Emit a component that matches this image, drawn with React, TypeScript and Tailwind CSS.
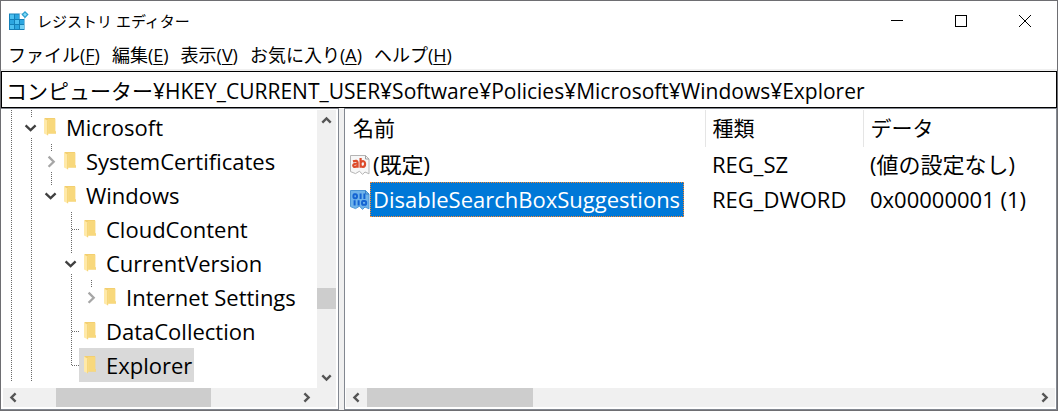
import React, { useState } from "react";

type Guide = "none" | "full" | "branch" | "last" | "open" | "openEnd" | "closed" | "closedEnd";

interface ITreeItem {
  name: string;
  guides: Guide[];
}

interface IValue {
  name: string;
  kind: "string" | "binary";
  type: string;
  data: string;
}

const menus = [
  { label: "ファイル", hotkey: "F" },
  { label: "編集", hotkey: "E" },
  { label: "表示", hotkey: "V" },
  { label: "お気に入り", hotkey: "A" },
  { label: "ヘルプ", hotkey: "H" },
];

const tree: ITreeItem[] = [
  { name: "Microsoft", guides: ["full", "open"] },
  { name: "SystemCertificates", guides: ["full", "full", "closed"] },
  { name: "Windows", guides: ["full", "full", "openEnd"] },
  { name: "CloudContent", guides: ["full", "full", "none", "branch"] },
  { name: "CurrentVersion", guides: ["full", "full", "none", "open"] },
  { name: "Internet Settings", guides: ["full", "full", "none", "full", "closedEnd"] },
  { name: "DataCollection", guides: ["full", "full", "none", "branch"] },
  { name: "Explorer", guides: ["full", "full", "none", "last"] },
];

const values: IValue[] = [
  { name: "(既定)", kind: "string", type: "REG_SZ", data: "(値の設定なし)" },
  {
    name: "DisableSearchBoxSuggestions",
    kind: "binary",
    type: "REG_DWORD",
    data: "0x00000001 (1)",
  },
];

// dotted line of each kind of cell
const guideLines: Record<Guide, string> = {
  none: "",
  full: "M10.5 0V34",
  branch: "M10.5 0V34M11 17.5H18",
  last: "M10.5 0V18M11 17.5H18",
  open: "M10.5 0V8M10.5 28V34",
  openEnd: "M10.5 0V8",
  closed: "M10.5 0V8M10.5 28V34",
  closedEnd: "M10.5 0V8",
};

const TreeGuide = ({ guide, last }: { guide: Guide; last: boolean }) => (
  <svg
    viewBox={last ? "0 0 18 34" : "0 0 20 34"}
    className={last ? "h-[34px] w-[18px] shrink-0" : "h-[34px] w-5 shrink-0"}
    fill="none"
    aria-hidden="true"
  >
    <path d={guideLines[guide]} stroke="#6b6b6b" strokeDasharray="1 1" shapeRendering="crispEdges" />
    {guide.startsWith("open") && (
      <path d="M4.6 15.4L9.6 20.2L14.6 15.4" stroke="#404040" strokeWidth="2.3" />
    )}
    {guide.startsWith("closed") && (
      <path d="M7.6 12.6L12.7 17.7L7.6 22.8" stroke="#a6a6a6" strokeWidth="2.3" />
    )}
  </svg>
);

const FolderIcon = () => (
  <svg viewBox="0 0 12 18" className="h-[18px] w-3 shrink-0" aria-hidden="true">
    <path d="M0.5 0H10.6Q11.2 0 11.2 0.6V13.5H12V15.5H4L0.5 14Z" fill="#f3cf70" />
    <path d="M4 1H11.2V13.5H12V15.5H4Z" fill="#f8d87c" />
    <path d="M0 0.6L4.2 3V17.6L0 15.4Z" fill="#ffe9a8" />
    <path d="M3.6 3V17.2" stroke="#f3cf6d" strokeWidth="0.8" />
  </svg>
);

const RegeditIcon = () => (
  <svg viewBox="0 0 20 20" className="h-5 w-5" aria-hidden="true">
    <path d="M0 2.5H15.5V19H0Z" fill="#1480b8" />
    <path d="M1 3.5H5V8H1ZM6 9H10V13H6ZM1 14H5V18H1Z" fill="#4cc0f0" />
    <path d="M6 3.5H10V8H6ZM1 9H5V13H1ZM11 9H15V13H11ZM6 14H10V18H6Z" fill="#2ba6e0" />
    <path d="M11 14H15V18H11Z" fill="#74d2f6" />
    <path d="M10.6 2.4H15.5V8H10.6Z" fill="#ffffff" />
    <path d="M16 0L19.6 3.6L16 7.2L12.4 3.6Z" fill="#2a9fd0" />
    <path d="M16 1.8L17.8 3.6L16 5.4L14.2 3.6Z" fill="#86dcf7" />
  </svg>
);

const ValueIcon = ({ kind }: { kind: IValue["kind"] }) => (
  <svg viewBox="0 0 20 20" className="h-5 w-5 shrink-0" fill="none" aria-hidden="true">
    <path
      d="M0.5 0.5H15.5L19 4V18.8L15 17L12.5 19.4L9.5 16.2L5.5 18.6L0.5 16.6Z"
      fill={kind === "string" ? "#f7f7f7" : "#6fb3ea"}
      stroke={kind === "string" ? "#b4b4b4" : "#4c96d6"}
    />
    <path d="M15.5 0.5V4H19" stroke={kind === "string" ? "#a0a0a0" : "#3c82c4"} />
    {kind === "string" ? (
      <g stroke="#dd4b2b" strokeWidth="2.2">
        <path d="M3 6.4Q7.6 4.8 7.6 7.6V12.8M7.6 8.8Q3.2 8.4 3.2 10.4Q3.4 12.4 5.6 11.8L7.6 10.6" />
        <path d="M10.6 3V12.8M10.6 7.6Q11.8 5.8 13.6 6.2Q15.2 6.8 15.1 9Q15 11.8 13 11.9Q11.6 12 10.6 10.6" />
      </g>
    ) : (
      <g stroke="#1464d2" strokeWidth="2">
        <path d="M4.4 4.2H5.6Q7 4.2 7 6.2Q7 8.2 5.6 8.2H4.8Q3.4 8.2 3.4 6.2Q3.4 4.2 4.4 4.2ZM10.6 3.4V9M14.4 3.4V9" />
        <path d="M4.6 10.2V15.6M8.6 10.2V15.6M13 11H14.6Q16.2 11 16.2 12.9Q16.2 14.8 14.6 14.8H13.4Q12 14.8 12 12.9Q12 11 13 11Z" />
      </g>
    )}
  </svg>
);

const arrows = {
  up: "M5.3 11.6L9.5 7.4L13.7 11.6",
  down: "M5.3 7.4L9.5 11.6L13.7 7.4",
  left: "M11.6 5.3L7.4 9.5L11.6 13.7",
  right: "M7.4 5.3L11.6 9.5L7.4 13.7",
};

const ScrollButton = ({ to, label }: { to: keyof typeof arrows; label: string }) => (
  <button
    type="button"
    aria-label={label}
    className={`flex shrink-0 items-center justify-center ${
      to === "up" || to === "down" ? "h-[21px]" : "w-[21px]"
    }`}
  >
    <svg viewBox="0 0 19 19" className="h-[19px] w-[19px]" fill="none">
      <path d={arrows[to]} stroke="#555555" strokeWidth="2.4" />
    </svg>
  </button>
);

const App = () => {
  const [path, setPath] = useState(
    "コンピューター¥HKEY_CURRENT_USER¥Software¥Policies¥Microsoft¥Windows¥Explorer"
  );
  const [selectedKey, setSelectedKey] = useState("Explorer");
  const [selectedValue, setSelectedValue] = useState("DisableSearchBoxSuggestions");

  return (
    <div className="flex min-h-screen w-full flex-col border border-[#6e6e72] bg-white font-['Open_Sans','Noto_Sans_CJK_JP',sans-serif] text-black">
      <header className="flex h-10 items-center justify-between pl-2">
        <div className="flex items-center gap-2">
          <RegeditIcon />
          <h1 className="text-[15px]">レジストリ エディター</h1>
        </div>
        <div className="flex h-full">
          <button type="button" aria-label="最小化" className="flex w-16 items-center justify-center">
            <svg viewBox="0 0 12 12" className="h-3 w-3" stroke="#000" shapeRendering="crispEdges">
              <path d="M0 5.5H12" />
            </svg>
          </button>
          <button type="button" aria-label="最大化" className="flex w-16 items-center justify-center">
            <svg viewBox="0 0 12 12" className="h-3 w-3" fill="none" stroke="#000" shapeRendering="crispEdges">
              <path d="M0.5 0.5H11.5V11.5H0.5Z" />
            </svg>
          </button>
          <button type="button" aria-label="閉じる" className="flex w-16 items-center justify-center">
            <svg viewBox="0 0 12 12" className="h-3 w-3" stroke="#000">
              <path d="M0 0L12 12M12 0L0 12" />
            </svg>
          </button>
        </div>
      </header>

      <nav className="flex h-[30px] items-center gap-3 border-b-2 border-[#f0f0f0] pl-[7px] text-[18px]">
        {menus.map((menu) => (
          <button key={menu.hotkey} type="button" className="whitespace-nowrap">
            {menu.label}(<span className="underline underline-offset-2">{menu.hotkey}</span>)
          </button>
        ))}
      </nav>

      <input
        type="text"
        aria-label="アドレス"
        value={path}
        onChange={(e) => setPath(e.target.value)}
        className="h-[37px] w-full border border-black bg-white pl-1 text-[21px] outline-none"
      />

      <main className="flex flex-1 bg-[#f0f0f0]">
        <section className="mr-[5px] flex w-[338px] shrink-0 flex-col border border-l-0 border-[#828790] bg-white">
          <div className="flex flex-1">
            <ul className="min-w-0 flex-1 overflow-hidden pt-px text-[22px]">
              {tree.map((item) => (
                <li key={item.name} className="flex h-[34px]">
                  {item.guides.map((guide, idx) => (
                    <TreeGuide key={idx} guide={guide} last={idx === item.guides.length - 1} />
                  ))}
                  <button
                    type="button"
                    onClick={() => setSelectedKey(item.name)}
                    className={`flex items-center gap-[10px] pr-[2px] pl-[5px] whitespace-nowrap ${
                      selectedKey === item.name ? "bg-[#d9d9d9]" : ""
                    }`}
                  >
                    <FolderIcon />
                    {item.name}
                  </button>
                </li>
              ))}
            </ul>
            <div className="mt-px mr-[2px] flex w-[19px] flex-col bg-[#f0f0f0]">
              <ScrollButton to="up" label="上へスクロール" />
              <div className="flex flex-1 flex-col justify-end pb-[58px]">
                <div className="h-[21px] bg-[#cdcdcd]" />
              </div>
              <ScrollButton to="down" label="下へスクロール" />
            </div>
          </div>
          <div className="mx-[2px] mb-[2px] flex h-[19px] bg-[#f0f0f0] pr-[19px]">
            <ScrollButton to="left" label="左へスクロール" />
            <div className="flex-1 pl-8">
              <div className="h-full w-[155px] bg-[#cdcdcd]" />
            </div>
            <ScrollButton to="right" label="右へスクロール" />
          </div>
        </section>

        <section className="flex min-w-0 flex-1 flex-col border border-[#828790] bg-white">
          <div className="flex-1 overflow-hidden p-px">
            <table className="w-full table-fixed text-left text-[22px] whitespace-nowrap">
              <thead>
                <tr className="h-[37px] text-[21px]">
                  <th className="w-[359px] border-r border-[#e5e5e5] pl-[7px] font-normal">名前</th>
                  <th className="w-[158px] border-r border-[#e5e5e5] pl-[7px] font-normal">種類</th>
                  <th className="pl-[7px] font-normal">データ</th>
                </tr>
              </thead>
              <tbody>
                {values.map((value) => (
                  <tr
                    key={value.name}
                    className="h-[35px] leading-[33px]"
                    onClick={() => setSelectedValue(value.name)}
                  >
                    <td className="p-0">
                      <div className="flex items-center pl-1">
                        <ValueIcon kind={value.kind} />
                        <span
                          className={`border pl-[2px] ${
                            selectedValue === value.name
                              ? "border-dotted border-[#ff8728] bg-[#0078d7] pr-[3px] text-white"
                              : "border-transparent"
                          }`}
                        >
                          {value.name}
                        </span>
                      </div>
                    </td>
                    <td className="p-0 pl-[7px]">{value.type}</td>
                    <td className="p-0 pl-[7px]">{value.data}</td>
                  </tr>
                ))}
              </tbody>
            </table>
          </div>
          <div className="mx-px mb-[2px] flex h-[19px] bg-[#f0f0f0]">
            <ScrollButton to="left" label="左へスクロール" />
            <div className="flex-1">
              <div className="h-full w-[166px] bg-[#cdcdcd]" />
            </div>
            <ScrollButton to="right" label="右へスクロール" />
          </div>
        </section>
      </main>
    </div>
  );
};

export default App;
